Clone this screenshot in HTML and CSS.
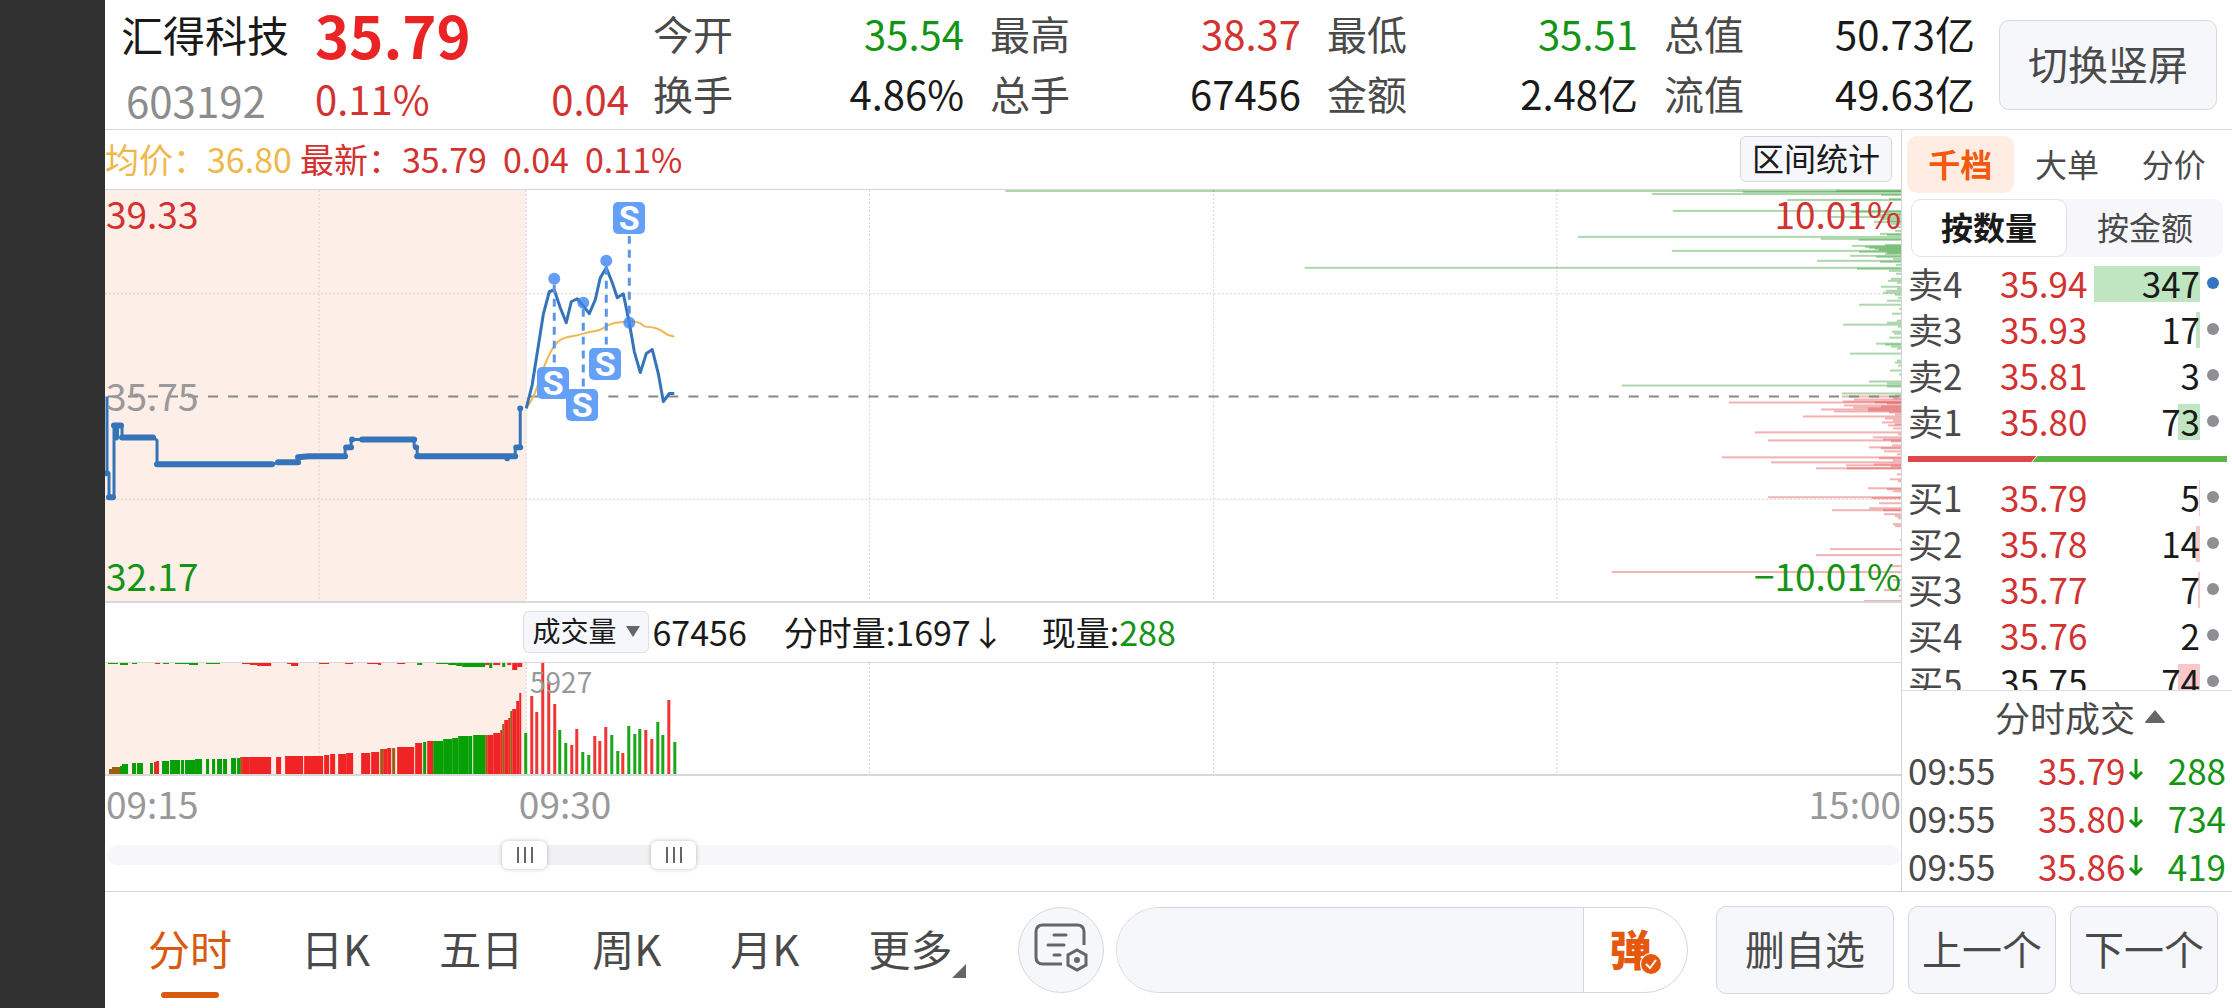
FILE: index.html
```html
<!DOCTYPE html>
<html lang="zh-CN">
<head>
    <meta charset="UTF-8">
    <meta name="viewport" content="width=device-width, initial-scale=1.0">
    <title>汇得科技 603192</title>
    <link rel="stylesheet" href="styles.css">
</head>
<body>
    <div class="app">
        <header class="header">
            <div class="quote">
                <h1 class="name">汇得科技</h1>
                <strong class="price">35.79</strong>
                <span class="code">603192</span>
                <span class="change up"><span>0.11%</span><span>0.04</span></span>
            </div>
            <dl class="stats">
                <div><dt>今开</dt><dd class="down">35.54</dd></div>
                <div><dt>最高</dt><dd class="up">38.37</dd></div>
                <div><dt>最低</dt><dd class="down">35.51</dd></div>
                <div><dt>总值</dt><dd>50.73亿</dd></div>
                <div><dt>换手</dt><dd>4.86%</dd></div>
                <div><dt>总手</dt><dd>67456</dd></div>
                <div><dt>金额</dt><dd>2.48亿</dd></div>
                <div><dt>流值</dt><dd>49.63亿</dd></div>
            </dl>
            <button type="button" class="btn btn-rotate">切换竖屏</button>
        </header>

        <main class="main">
            <section class="charts">
                <div class="info-bar">
                    <span class="avg">均价：36.80</span>
                    <span class="up">最新：35.79</span>
                    <span class="up">0.04</span>
                    <span class="up">0.11%</span>
                    <button type="button" class="btn btn-range">区间统计</button>
                </div>

                <div class="price-chart" id="price-chart">
                    <svg viewBox="0 0 1795 412" preserveAspectRatio="none">
                        <rect class="auction-bg" x="0" y="0" width="421" height="412"/>
                        <path class="grid-line" d="M214 0V412M421 0V412M764 0V412M1108 0V412M1451 0V412M0 104H1795M0 310H1795"/>
                        <g id="depth"></g>
                        <path class="prev-close" d="M3 207H1795"/>
                        <path class="line" d="M2 207V284H4V308H9V236H17V248H48L52 251V275H167L173 273H193V268L204 267H240V258H246V250H309V258H312V267H410V258H415V219"/>
                        <path class="auction-dots" d="M2 284V284M4 308H8M9 236H16M11 248V238M17 248H48M52 275H167M173 273H193M193 268L204 267H240M241 258H246M247 250V250M257 250H309M311 258V258M312 267H410M402 269V269M411 258H415M415 219V219"/>
                        <path class="line avg-line" d="M421 219C429 208 431 200 435 188S446 157 454 151S467 148 478 144S492 143 499 138S510 133 524 132S536 137 541 137S554 139 559 143S566 146 569 147"/>
                        <path class="line" d="M421 219L427 195L438 125L444 102L449 100L455 118L461 133L466 112L472 109L478 116L484 124L490 110L495 88L501 78L507 93L512 108L518 104L524 133L529 162L535 183L541 164L547 160L553 184L558 212L564 204H569"/>
                        <path class="marker-line" d="M449 95V178M478 119V200M501 77V158M524 46V133"/>
                        <g class="marker-dot">
                            <circle cx="449" cy="89" r="6"/>
                            <circle cx="478" cy="113" r="6"/>
                            <circle cx="501" cy="71" r="6"/>
                            <circle cx="524" cy="133" r="6"/>
                        </g>
                    </svg>
                    <span class="scale top up">39.33</span>
                    <span class="scale middle">35.75</span>
                    <span class="scale bottom down">32.17</span>
                    <span class="scale top right up">10.01%</span>
                    <span class="scale bottom right down">−10.01%</span>
                </div>

                <div class="volume-bar">
                    <label class="picker">
                        <select aria-label="指标">
                            <option>成交量</option>
                            <option>成交额</option>
                        </select>
                    </label>
                    <span class="total">67456</span>
                    <span class="minute">分时量:1697↓</span>
                    <span>现量:<span class="down">288</span></span>
                </div>

                <div class="volume-chart">
                    <svg viewBox="0 0 1795 111" preserveAspectRatio="none">
                        <rect class="auction-bg" x="0" y="0" width="421" height="111"/>
                        <path class="grid-line" d="M214 0V111M421 0V111M764 0V111M1108 0V111M1451 0V111"/>
                        <g id="volume"></g>
                    </svg>
                    <span class="peak">5927</span>
                </div>

                <div class="time-axis">
                    <span>09:15</span>
                    <span>09:30</span>
                    <span>15:00</span>
                </div>

                <div class="range">
                    <div class="range-selected"></div>
                    <input type="range" min="0" max="1000" value="226" aria-label="开始时间">
                    <input type="range" min="0" max="1000" value="311" aria-label="结束时间">
                </div>
            </section>

            <aside class="side">
                <div class="tabs">
                    <button type="button" class="active">千档</button>
                    <button type="button">大单</button>
                    <button type="button">分价</button>
                </div>
                <div class="sub-tabs">
                    <button type="button" class="active">按数量</button>
                    <button type="button">按金额</button>
                </div>
                <div class="book">
                    <table class="levels sell" id="sell"></table>
                    <div class="ratio">
                        <svg viewBox="0 0 318 6" preserveAspectRatio="none">
                            <path fill="#df4848" d="M0 0H128L123 6H0z"/>
                            <path fill="#5cb54a" d="M129 0H318V6H124z"/>
                        </svg>
                    </div>
                    <table class="levels buy" id="buy"></table>
                </div>
                <button type="button" class="trades-title">分时成交
                    <svg width="20" height="13" viewBox="0 0 20 13"><path d="M10 0L20 12Q20 13 19 13H1Q0 13 0 12z" fill="#666"/></svg>
                </button>
                <table class="trades">
                    <tr><td>09:55</td><td class="up">35.79</td><td class="arrow"><svg width="16" height="24" viewBox="0 0 16 24"><path d="M8 2V21M2 15L8 21L14 15"/></svg></td><td class="down">288</td></tr>
                    <tr><td>09:55</td><td class="up">35.80</td><td class="arrow"><svg width="16" height="24" viewBox="0 0 16 24"><path d="M8 2V21M2 15L8 21L14 15"/></svg></td><td class="down">734</td></tr>
                    <tr><td>09:55</td><td class="up">35.86</td><td class="arrow"><svg width="16" height="24" viewBox="0 0 16 24"><path d="M8 2V21M2 15L8 21L14 15"/></svg></td><td class="down">419</td></tr>
                </table>
            </aside>
        </main>

        <footer class="footer">
            <nav class="periods">
                <a href="#" class="active">分时</a>
                <a href="#">日K</a>
                <a href="#">五日</a>
                <a href="#">周K</a>
                <a href="#">月K</a>
                <a href="#" class="more">更多</a>
            </nav>
            <button type="button" class="note-btn" aria-label="弹幕设置">
                <svg width="54" height="50" viewBox="0 0 54 50" fill="none" stroke="#666" stroke-width="3" stroke-linecap="round">
                    <path d="M50 22V9Q50 2 43 2H9Q2 2 2 9V34Q2 41 9 41H28" stroke-linecap="butt"/>
                    <path d="M20 12H32M14 22H30M20 32H26"/>
                    <path d="M43 27L52 32V42L43 47L34 42V32z"/>
                    <circle cx="43" cy="37" r="3" fill="#666" stroke="none"/>
                </svg>
            </button>
            <div class="comment">
                <input type="text" aria-label="发弹幕">
                <button type="button">弹
                    <svg width="22" height="22" viewBox="0 0 22 22"><circle cx="11" cy="11" r="11" fill="#fff"/><circle cx="11" cy="11" r="10" fill="#e4590f"/><path d="M6 11L10 15L16 7" fill="none" stroke="#fff" stroke-width="2"/></svg>
                </button>
            </div>
            <button type="button" class="btn btn-remove">删自选</button>
            <button type="button" class="btn btn-step">上一个</button>
            <button type="button" class="btn btn-step">下一个</button>
        </footer>
    </div>
    <script src="script.js"></script>
</body>
</html>
```
FILE: styles.css
```css
* {
    margin: 0;
    padding: 0;
    box-sizing: border-box;
}

body {
    font-family: "Noto Sans CJK SC", "Noto Sans", sans-serif;
    font-size: 34px;
    line-height: 1;
    color: #1a1a1a;
    background: #fff;
}

button,
input,
select {
    font: inherit;
    color: inherit;
    border: none;
    background: none;
}

button {
    padding-bottom: 4px;
}

svg {
    display: block;
}

.up {
    color: #d23230;
}

.down {
    color: #149414;
}

.app {
    display: flex;
    flex-direction: column;
    min-height: 100vh;
    border-left: 105px solid #303030;
}

.btn {
    color: #4a4a4a;
    background: #f6f7fa;
    border: 1px solid #d5d8dc;
    border-radius: 10px;
    white-space: nowrap;
}

/* header */
.header {
    display: flex;
    align-items: flex-start;
    height: 130px;
    padding: 0 15px 0 16px;
    border-bottom: 1px solid #d3d6d8;
    font-size: 40px;
}

.quote {
    display: grid;
    grid-template-columns: 190px 1fr;
    grid-template-rows: 68px 60px;
    align-items: center;
    width: 508px;
}

.name {
    font-size: 42px;
    font-weight: 400;
}

.price {
    font-size: 58px;
    color: #ea2424;
    margin-left: 4px;
}

.code {
    color: #8c8c8c;
    font-size: 42px;
    padding: 4px 0 0 5px;
}

.change {
    display: flex;
    justify-content: space-between;
    font-size: 40px;
    margin-left: 4px;
}

.stats {
    flex: 1;
    display: grid;
    grid-template-columns: repeat(4, 1fr);
    grid-auto-rows: 60px;
    gap: 0 26px;
    padding: 3px 24px 0 24px;
}

.stats div {
    display: flex;
    align-items: center;
    justify-content: space-between;
}

.stats dt {
    color: #4a4a4a;
}

.btn-rotate {
    width: 218px;
    height: 90px;
    margin-top: 20px;
}

/* charts */
.main {
    flex: 1;
    display: flex;
}

.charts {
    flex: 1;
    min-width: 0;
}

.info-bar {
    display: flex;
    align-items: center;
    height: 60px;
    padding: 0 9px 2px 0;
    border-bottom: 1px solid #d3d6d8;
    gap: 16px;
    white-space: nowrap;
}

.info-bar .avg {
    color: #efb84c;
    margin-right: -8px;
}

.btn-range {
    width: 152px;
    height: 46px;
    margin-left: auto;
    font-size: 32px;
    color: #1a1a1a;
    border-radius: 6px;
}

.price-chart,
.volume-chart {
    position: relative;
    border-bottom: 2px solid #d8d8d8;
}

.price-chart svg,
.volume-chart svg {
    width: 100%;
}

.price-chart svg {
    height: 411px;
}

.volume-chart svg {
    height: 111px;
}

.auction-bg {
    fill: #fdeee7;
}

.grid-line {
    fill: none;
    stroke: #d6d3d1;
    stroke-width: 1;
    stroke-dasharray: 2 2;
}

.prev-close {
    stroke: #888;
    stroke-width: 2;
    stroke-dasharray: 10 10;
}

.line {
    fill: none;
    stroke: #3674b9;
    stroke-width: 3;
    stroke-linejoin: round;
}

.avg-line {
    stroke: #edb953;
    stroke-width: 2;
}

.auction-dots {
    fill: none;
    stroke: #3674b9;
    stroke-width: 6;
    stroke-linecap: round;
}

.marker-line {
    stroke: #5a96e8;
    stroke-width: 3;
    stroke-dasharray: 8 6;
}

.marker-dot {
    fill: #3d84f0;
    fill-opacity: 0.8;
}

.marker {
    position: absolute;
    width: 32px;
    height: 32px;
    margin: -16px 0 0 -16px;
    border-radius: 5px;
    background: #649ff8;
    color: #fff;
    font-family: Roboto, sans-serif;
    font-size: 34px;
    font-weight: 700;
    line-height: 32px;
    text-align: center;
}

.scale {
    position: absolute;
    left: 1px;
    font-size: 37px;
}

.scale.top {
    top: 5px;
}

.scale.middle {
    top: 187px;
    color: #999;
}

.scale.bottom {
    bottom: 7px;
}

.scale.right {
    left: auto;
    right: 0;
}

.volume-bar {
    display: flex;
    align-items: center;
    height: 60px;
    padding: 0 0 2px 23.3%;
    border-bottom: 1px solid #d8d8d8;
    white-space: nowrap;
}

.picker {
    position: relative;
}

.picker select {
    appearance: none;
    display: block;
    width: 126px;
    height: 42px;
    padding: 0 0 3px 8px;
    font-size: 28px;
    background: #f6f7fa;
    border: 1px solid #dcdfe3;
    border-radius: 6px;
}

.picker::after {
    content: "";
    position: absolute;
    right: 9px;
    top: 15px;
    border: 7px solid transparent;
    border-top: 11px solid #666;
    border-bottom: none;
    pointer-events: none;
}

.total {
    margin-left: 3px;
}

.minute {
    margin: 0 37px;
}

.peak {
    position: absolute;
    left: 24%;
    top: 4px;
    margin-left: -6px;
    font-size: 28px;
    color: #999;
}

.time-axis {
    display: grid;
    grid-template-columns: 23% 1fr auto;
    align-items: center;
    height: 54px;
    padding-left: 1px;
    font-size: 37px;
    color: #999;
}

.range {
    position: relative;
    height: 20px;
    margin: 15px 0 0 2px;
    border-radius: 10px;
    background: #f7f7fa;
}

.range-selected {
    height: 20px;
    margin: 0 68% 0 24%;
    background: #f1f1f4;
}

.range input {
    appearance: none;
    position: absolute;
    left: 0;
    top: -4px;
    width: 100%;
    height: 28px;
    pointer-events: none;
}

.range input::-webkit-slider-thumb {
    appearance: none;
    pointer-events: auto;
    width: 45px;
    height: 28px;
    border-radius: 6px;
    background:
        linear-gradient(#666, #666) 15px 6px / 2px 16px no-repeat,
        linear-gradient(#666, #666) 22px 6px / 2px 16px no-repeat,
        linear-gradient(#666, #666) 29px 6px / 2px 16px no-repeat,
        #fff;
    box-shadow: 0 0 4px rgba(0, 0, 0, 0.25);
}

/* side panel */
.side {
    width: 331px;
    border-left: 1px solid #d3d6d8;
    font-size: 35px;
    color: #4a4a4a;
}

.tabs {
    display: grid;
    grid-template-columns: repeat(3, 1fr);
    height: 69px;
    padding: 6px 5px;
    font-size: 32px;
}

.tabs .active {
    color: #f2590c;
    font-weight: 700;
    background: #ffece3;
    border-radius: 10px;
}

.sub-tabs {
    display: grid;
    grid-template-columns: 1fr 1fr;
    height: 58px;
    margin: 0 9px;
    font-size: 32px;
    background: #f7f7fb;
    border-radius: 10px;
}

.sub-tabs .active {
    color: #1a1a1a;
    font-weight: 700;
    background: #fff;
    border: 1px solid #e2e2e6;
    border-radius: 10px;
}

.book {
    height: 434px;
    padding-top: 5px;
    overflow: hidden;
    border-bottom: 1px solid #dedede;
}

.levels,
.trades {
    width: 100%;
    border-collapse: collapse;
    table-layout: fixed;
}

.levels tr {
    height: 46px;
}

.levels td {
    padding-bottom: 5px;
}

.levels td:nth-child(1) {
    width: 98px;
    padding-left: 6px;
}

.levels td:nth-child(2) {
    width: 94px;
}

.levels .flat {
    color: #1a1a1a;
}

.levels .amount {
    width: 106px;
    padding-bottom: 2px;
    color: #1a1a1a;
}

.amount div {
    position: relative;
    height: 36px;
    line-height: 34px;
    text-align: right;
}

.amount i {
    position: absolute;
    right: 0;
    top: 0;
    height: 36px;
    background: #f9c8c8;
}

.sell .amount i {
    background: #bfe6c1;
}

.amount span {
    position: relative;
}

.dot::after {
    content: "";
    display: block;
    width: 12px;
    height: 12px;
    margin-left: 7px;
    border-radius: 50%;
    background: #8e8e93;
}

.dot.mine::after {
    background: #3674c0;
}

.ratio {
    padding: 10px 5px 14px 6px;
}

.ratio svg {
    width: 100%;
    height: 6px;
}

.trades-title {
    display: flex;
    align-items: center;
    justify-content: center;
    gap: 10px;
    width: 100%;
    height: 54px;
    padding-left: 26px;
}

.trades tr {
    height: 48px;
}

.trades td:nth-child(1) {
    width: 136px;
    padding-left: 6px;
}

.trades td:nth-child(2) {
    width: 90px;
}

.trades td:nth-child(3) {
    width: 20px;
}

.trades td:nth-child(4) {
    text-align: right;
    padding-right: 6px;
}

.arrow path {
    fill: none;
    stroke: #149414;
    stroke-width: 3;
}

/* bottom bar */
.footer {
    display: flex;
    align-items: center;
    height: 117px;
    padding: 0 14px 0 43px;
    border-top: 1px solid #d3d6d8;
    font-size: 40px;
}

.periods {
    display: flex;
    gap: 69px;
    margin-right: 66px;
    padding-bottom: 4px;
    font-size: 42px;
    white-space: nowrap;
}

.periods a {
    position: relative;
    color: #4a4a4a;
    text-decoration: none;
}

.periods .active {
    color: #d9590f;
}

.periods .active::after {
    content: "";
    position: absolute;
    left: 13px;
    bottom: -29px;
    width: 58px;
    height: 6px;
    border-radius: 3px;
    background: #d9590f;
}

.more::after {
    content: "";
    position: absolute;
    right: -14px;
    bottom: -9px;
    border-left: 14px solid transparent;
    border-bottom: 14px solid #666;
}

.note-btn {
    display: flex;
    align-items: center;
    justify-content: center;
    width: 86px;
    height: 86px;
    margin-right: 12px;
    border: 1px solid #d5d8dc;
    border-radius: 50%;
    background: #f6f7fa;
}

.comment {
    flex: 1;
    display: flex;
    height: 86px;
    margin-right: 28px;
    border: 1px solid #d5d8dc;
    border-radius: 43px;
    overflow: hidden;
}

.comment input {
    flex: 1;
    min-width: 0;
    padding: 0 40px;
    background: #f6f7fa;
    border-right: 1px solid #d5d8dc;
}

.comment button {
    position: relative;
    width: 103px;
    padding-right: 10px;
    font-size: 42px;
    font-weight: 900;
    color: #e4590f;
}

.comment svg {
    position: absolute;
    left: 56px;
    bottom: 17px;
}

.footer .btn {
    height: 88px;
}

.btn-remove {
    width: 178px;
}

.btn-step {
    width: 148px;
    margin-left: 14px;
}
```
FILE: script.js
```js
const SVG_NS = 'http://www.w3.org/2000/svg';

function addRect(group, x, y, width, height, fill, opacity) {
    const rect = document.createElementNS(SVG_NS, 'rect');
    rect.setAttribute('x', x);
    rect.setAttribute('y', y);
    rect.setAttribute('width', width);
    rect.setAttribute('height', height);
    rect.setAttribute('fill', fill);
    if (opacity) {
        rect.setAttribute('fill-opacity', opacity);
    }
    group.appendChild(rect);
}

// Order depth on the right edge: [y, length]
const asks = [
    [0, 895], [0, 65], [1, 158], [3, 249], [4, 20], [9, 114], [8, 12], [20, 228], [21, 50], [23, 16], [24, 22], [26, 72], [28, 18],
    [30, 12], [31, 27], [33, 10], [36, 8], [40, 6], [43, 21], [44, 14], [46, 323], [48, 80], [49, 42], [54, 16], [55, 49], [56, 36],
    [57, 32], [58, 26], [59, 22], [60, 229], [61, 42], [62, 14], [63, 16], [65, 51], [66, 25], [68, 8], [70, 84], [71, 21], [74, 5],
    [77, 596], [78, 44], [80, 12], [83, 5], [88, 10], [90, 13], [92, 4], [96, 20], [98, 4], [100, 15], [102, 18], [104, 6], [107, 3],
    [110, 14], [114, 42], [118, 2], [123, 9], [130, 4], [132, 14], [134, 58], [136, 3], [141, 9], [143, 7], [147, 12], [153, 25],
    [154, 16], [156, 10], [158, 4], [163, 51], [170, 4], [172, 6], [175, 3], [180, 11], [184, 2], [191, 32], [193, 14], [195, 279],
    [196, 14], [203, 59], [205, 6]
];
const bids = [
    [206, 59], [208, 8], [209, 47], [211, 58], [212, 172], [212, 26], [213, 14], [215, 57], [216, 20], [217, 48], [218, 33], [219, 80],
    [220, 33], [221, 67], [222, 12], [224, 6], [226, 98], [228, 16], [230, 8], [232, 19], [234, 6], [235, 13], [238, 8], [242, 146],
    [244, 3], [247, 28], [249, 18], [250, 133], [251, 10], [255, 9], [257, 32], [258, 20], [261, 17], [264, 4], [267, 179], [268, 22],
    [270, 8], [272, 130], [274, 27], [275, 55], [276, 10], [278, 85], [278, 54], [284, 4], [289, 11], [291, 3], [298, 33], [299, 14],
    [301, 8], [307, 133], [308, 29], [313, 22], [318, 32], [320, 69], [320, 18], [324, 17], [326, 6], [328, 3], [334, 8], [336, 6],
    [350, 1], [359, 71], [365, 85], [376, 10], [382, 289], [390, 8], [400, 17], [406, 2], [411, 37]
];
const depth = document.getElementById('depth');
asks.forEach(([y, length]) => addRect(depth, 1795 - length, y, length, 2, '#38a038', 0.42));
bids.forEach(([y, length]) => addRect(depth, 1795 - length, y, length, 2, '#e04848', 0.42));

// Trade markers
[[448, 193], [477, 215], [500, 174], [524, 28]].forEach(([x, y]) => {
    const marker = document.createElement('span');
    marker.className = 'marker';
    marker.textContent = 'S';
    marker.style.left = x / 1795 * 100 + '%';
    marker.style.top = y + 'px';
    document.getElementById('price-chart').appendChild(marker);
});

// Volume
const colors = { r: '#f02424', g: '#06a006', m: '#9a5f12' };
const volume = document.getElementById('volume');

// Call auction blocks: [x, width, height, color]
const auction = [
    [4, 3, 5, 'm'], [7, 8, 7, 'm'], [15, 2, 8, 'g'], [17, 6, 10, 'g'], [27, 4, 11, 'g'], [32, 6, 11, 'g'], [45, 3, 11, 'g'],
    [49, 2, 12, 'r'], [51, 3, 13, 'r'], [57, 7, 13, 'g'], [65, 10, 14, 'g'], [76, 3, 14, 'g'], [80, 10, 14, 'g'], [90, 7, 15, 'g'],
    [101, 3, 15, 'g'], [107, 3, 15, 'g'], [112, 5, 15, 'g'], [118, 4, 15, 'g'], [126, 5, 16, 'g'], [132, 3, 16, 'g'], [135, 2, 17, 'm'],
    [137, 7, 17, 'r'], [144, 22, 17, 'r'], [171, 5, 17, 'r'], [180, 18, 18, 'r'], [199, 19, 18, 'r'], [219, 5, 19, 'r'], [225, 5, 20, 'r'],
    [233, 8, 20, 'r'], [241, 7, 21, 'r'], [256, 9, 21, 'r'], [266, 8, 22, 'r'], [275, 3, 25, 'm'], [278, 4, 25, 'r'], [282, 4, 26, 'r'],
    [287, 3, 26, 'm'], [292, 17, 27, 'r'], [310, 7, 31, 'r'], [318, 3, 32, 'g'], [322, 6, 33, 'r'], [328, 10, 33, 'g'], [338, 9, 35, 'g'],
    [347, 6, 36, 'g'], [353, 10, 38, 'g'], [363, 4, 38, 'g'], [368, 12, 39, 'g'], [380, 2, 39, 'm'], [382, 6, 39, 'r'], [388, 7, 41, 'r'],
    [395, 2, 44, 'r'], [397, 2, 50, 'm'], [399, 4, 54, 'r'], [403, 2, 56, 'r'], [405, 2, 63, 'm'], [407, 4, 65, 'r'], [411, 3, 73, 'r'],
    [414, 2, 81, 'r']
];
auction.forEach(([x, width, height, color]) => addRect(volume, x, 111 - height, width, height, colors[color]));

// Unmatched volume, hanging from the top
const unmatched = [
    [3, 10, 1, 'g'], [15, 8, 2, 'g'], [27, 5, 1, 'g'], [50, 5, 1, 'r'], [58, 6, 1, 'g'], [70, 14, 1, 'g'], [84, 9, 2, 'g'], [101, 14, 1, 'g'],
    [137, 8, 1, 'r'], [145, 7, 2, 'r'], [152, 14, 3, 'r'], [182, 4, 1, 'r'], [186, 7, 3, 'r'], [214, 10, 1, 'r'], [240, 8, 1, 'r'],
    [262, 12, 1, 'r'], [273, 3, 2, 'r'], [292, 8, 1, 'r'], [312, 5, 2, 'g'], [331, 12, 1, 'g'], [343, 8, 2, 'g'], [351, 6, 3, 'g'],
    [357, 23, 4, 'g'], [380, 4, 2, 'r'], [384, 3, 5, 'g'], [388, 7, 2, 'r'], [397, 3, 4, 'g'], [402, 4, 2, 'r'], [407, 5, 7, 'r'], [412, 5, 4, 'r']
];
unmatched.forEach(([x, width, height, color]) => addRect(volume, x, 0, width, height, colors[color]));

// One bar per minute from 09:30
const minutes = [
    [41, 'g'], [78, 'r'], [62, 'r'], [111, 'r'], [92, 'r'], [70, 'r'], [44, 'g'], [31, 'g'], [29, 'r'], [45, 'r'], [22, 'g'], [19, 'g'],
    [38, 'r'], [33, 'r'], [47, 'r'], [39, 'g'], [23, 'g'], [21, 'r'], [48, 'g'], [40, 'g'], [45, 'g'], [44, 'r'], [35, 'r'], [52, 'g'],
    [39, 'g'], [74, 'r'], [32, 'g']
];
minutes.forEach(([height, color], i) => addRect(volume, 419 + Math.round(i * 5.72), 111 - height, 3, height, colors[color], 0.92));

// Order book: [label, price, amount]
const MAX_AMOUNT = 347;
const sell = [['卖4', '35.94', 347], ['卖3', '35.93', 17], ['卖2', '35.81', 3], ['卖1', '35.80', 73]];
const buy = [['买1', '35.79', 5], ['买2', '35.78', 14], ['买3', '35.77', 7], ['买4', '35.76', 2], ['买5', '35.75', 74]];

function renderLevels(id, rows) {
    document.getElementById(id).innerHTML = rows.map(([label, price, amount]) => `
        <tr>
            <td>${label}</td>
            <td class="${price === '35.75' ? 'flat' : 'up'}">${price}</td>
            <td class="amount"><div><i style="width: ${Math.floor(amount / MAX_AMOUNT * 100)}%"></i><span>${amount}</span></div></td>
            <td class="dot ${label === '卖4' ? 'mine' : ''}"></td>
        </tr>`).join('');
}

renderLevels('sell', sell);
renderLevels('buy', buy);
```
